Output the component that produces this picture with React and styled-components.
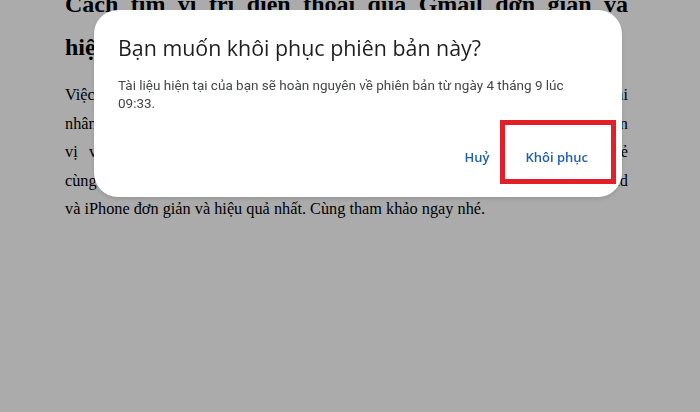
import React from 'react';
import styled, { createGlobalStyle } from 'styled-components';

const GlobalStyle = createGlobalStyle`
  html, body {
    margin: 0;
    padding: 0;
    background: #ffffff;
    overflow: hidden;
  }
  body {
    width: 700px;
    height: 412px;
  }
`;

const articleLines = [
  'Việc tìm vị trí điện thoại qua Gmail giúp bạn nhanh chóng tìm lại thiết bị khi',
  'nhân lúc bị mất hoặc thất lạc, giúp bạn xác định vị trí của thiết bị trên',
  'vị và theo dõi điện thoại từ xa bằng tài khoản Google, dễ dàng chia sẻ',
  'cùng hướng dẫn chi tiết cách tìm vị trí điện thoại qua Gmail trên Android',
  'và iPhone đơn giản và hiệu quả nhất. Cùng tham khảo ngay nhé.',
];

function App() {
  return (
    <>
      <GlobalStyle />
      <Article>
        <Heading>
          <HeadingLine $fill>Cách tìm vị trí điện thoại qua Gmail đơn giản và</HeadingLine>
          <HeadingLine>hiệu quả nhất</HeadingLine>
        </Heading>
        <Paragraph>
          {articleLines.map((line, idx) => (
            <TextLine key={idx} $fill={idx < articleLines.length - 1}>
              {line}
            </TextLine>
          ))}
        </Paragraph>
      </Article>

      <Backdrop />

      <Dialog>
        <Title>Bạn muốn khôi phục phiên bản này?</Title>
        <Message>
          Tài liệu hiện tại của bạn sẽ hoàn nguyên về phiên bản từ ngày 4 tháng 9 lúc 09:33.
        </Message>
        <Actions>
          <TextButton>Huỷ</TextButton>
          <TextButton>Khôi phục</TextButton>
        </Actions>
        <Highlight />
      </Dialog>
    </>
  );
}

export default App;

const Article = styled.div`
  width: 563px;
  margin-top: -17px;
  padding-left: 65px;
  color: #000000;
  font-family: 'Liberation Serif', 'Times New Roman', serif;
`;

const Heading = styled.h1`
  margin: 0;
  font-size: 24px;
  font-weight: bold;
  line-height: 43px;
`;

const HeadingLine = styled.div`
  white-space: nowrap;
  text-align: left;
  text-align-last: ${(props) => (props.$fill ? 'justify' : 'left')};
`;

const Paragraph = styled.div`
  margin-top: 12px;
  font-size: 16.3px;
  line-height: 28.5px;
`;

const TextLine = styled.div`
  white-space: nowrap;
  text-align-last: ${(props) => (props.$fill ? 'justify' : 'left')};
`;

const Backdrop = styled.div`
  position: fixed;
  inset: 0;
  background: rgba(0, 0, 0, 0.33);
`;

const Dialog = styled.div`
  position: fixed;
  left: 94px;
  top: 10px;
  width: 528px;
  box-sizing: border-box;
  padding: 24px 24px 22px;
  background: #ffffff;
  border-radius: 24px;
  box-shadow: 0 2px 4px rgba(0, 0, 0, 0.12);
`;

const Title = styled.h2`
  margin: 0;
  font-family: 'Open Sans', Roboto, sans-serif;
  font-size: 21.4px;
  font-weight: 400;
  line-height: 28px;
  color: #1f1f1f;
`;

const Message = styled.p`
  margin: 14px 0 0;
  font-family: Roboto, 'Noto Sans', sans-serif;
  font-size: 13.5px;
  line-height: 18px;
  color: #444746;
`;

const Actions = styled.div`
  display: flex;
  justify-content: flex-end;
  gap: 16px;
  margin-top: 27px;
`;

const TextButton = styled.button`
  height: 36px;
  padding: 0 10px;
  border: none;
  background: transparent;
  font-family: 'Open Sans', Roboto, sans-serif;
  font-size: 13px;
  font-weight: 600;
  color: #1d5fb5;
`;

const Highlight = styled.div`
  position: absolute;
  left: 406px;
  top: 110px;
  width: 116px;
  height: 64px;
  box-sizing: border-box;
  border: 5px solid #e3202a;
`;
